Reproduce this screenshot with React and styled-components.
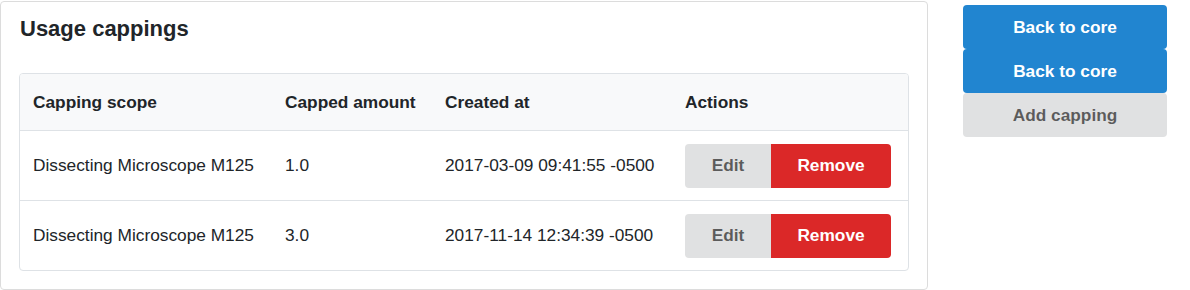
import React from "react";
import styled, { createGlobalStyle } from "styled-components";

const GlobalStyle = createGlobalStyle`
  body {
    margin: 0;
    background: #fff;
    font-family: "Liberation Sans", Arial, sans-serif;
    color: #212529;
  }
`;

const rows = [
  { scope: "Dissecting Microscope M125", amount: "1.0", created: "2017-03-09 09:41:55 -0500" },
  { scope: "Dissecting Microscope M125", amount: "3.0", created: "2017-11-14 12:34:39 -0500" },
];

const App = () => {
  return (
    <Page>
      <GlobalStyle />
      <Panel>
        <Title>Usage cappings</Title>
        <TableBox>
          <Table>
            <colgroup>
              <col style={{ width: 252 }} />
              <col style={{ width: 160 }} />
              <col style={{ width: 240 }} />
              <col />
            </colgroup>
            <thead>
              <tr>
                <Th>Capping scope</Th>
                <Th>Capped amount</Th>
                <Th>Created at</Th>
                <Th>Actions</Th>
              </tr>
            </thead>
            <tbody>
              {rows.map((row, i) => (
                <tr key={i}>
                  <Td>{row.scope}</Td>
                  <Td>{row.amount}</Td>
                  <Td>{row.created}</Td>
                  <Td>
                    <ButtonGroup>
                      <Button variant="grey" width={86}>Edit</Button>
                      <Button variant="red" width={120}>Remove</Button>
                    </ButtonGroup>
                  </Td>
                </tr>
              ))}
            </tbody>
          </Table>
        </TableBox>
      </Panel>
      <Sidebar>
        <SideButton variant="blue">Back to core</SideButton>
        <SideButton variant="blue">Back to core</SideButton>
        <SideButton variant="grey">Add capping</SideButton>
      </Sidebar>
    </Page>
  );
};

export default App;

const colors = {
  blue: { bg: "#2185d0", fg: "#fff" },
  red: { bg: "#db2828", fg: "#fff" },
  grey: { bg: "#e0e1e2", fg: "rgba(0,0,0,.6)" },
};

const Page = styled.div`
  display: grid;
  grid-template-columns: 928px 204px;
  column-gap: 35px;
  align-items: start;
  padding-top: 1px;
`;

const Panel = styled.div`
  box-sizing: border-box;
  height: 289px;
  border: 1px solid #dcdcdc;
  border-radius: 4px;
  padding: 12px 18px 18px;
`;

const Title = styled.h2`
  margin: 0 0 29px 1px;
  font-size: 22px;
  line-height: 30px;
  font-weight: 700;
  color: #212529;
`;

const TableBox = styled.div`
  border: 1px solid #dee2e6;
  border-radius: 4px;
  overflow: hidden;
`;

const Table = styled.table`
  width: 100%;
  border-collapse: collapse;
  table-layout: fixed;
  font-size: 17.3px;

  thead tr {
    background: #f8f9fa;
  }
  tbody tr {
    border-top: 1px solid #dee2e6;
  }
`;

const Th = styled.th`
  text-align: left;
  font-weight: 700;
  height: 56px;
  padding: 0 13px;
  vertical-align: middle;
`;

const Td = styled.td`
  height: 69px;
  padding: 0 13px;
  vertical-align: middle;
  white-space: nowrap;
`;

const ButtonGroup = styled.div`
  display: flex;
  border-radius: 4px;
  overflow: hidden;
  width: max-content;
`;

const Button = styled.div`
  box-sizing: border-box;
  width: ${(p) => p.width}px;
  height: 44px;
  display: flex;
  align-items: center;
  justify-content: center;
  font-weight: 700;
  font-size: 17.3px;
  background: ${(p) => colors[p.variant].bg};
  color: ${(p) => colors[p.variant].fg};
`;

const Sidebar = styled.div`
  display: flex;
  flex-direction: column;
  padding-top: 4px;
`;

const SideButton = styled.div`
  height: 44px;
  border-radius: 4px;
  display: flex;
  align-items: center;
  justify-content: center;
  font-weight: 700;
  font-size: 17.3px;
  background: ${(p) => colors[p.variant].bg};
  color: ${(p) => colors[p.variant].fg};
`;
